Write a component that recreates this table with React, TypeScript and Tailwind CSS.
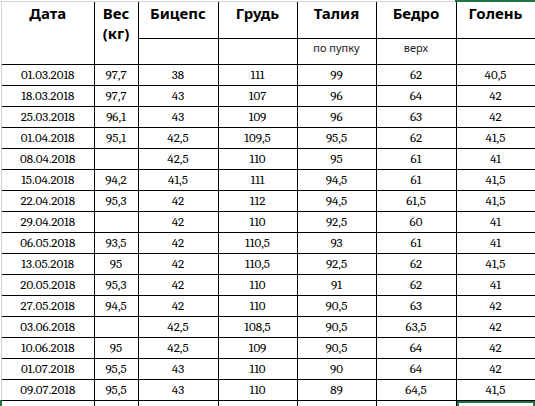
import React from "react";

const rows: string[][] = [
  ["01.03.2018", "97,7", "38", "111", "99", "62", "40,5"],
  ["18.03.2018", "97,7", "43", "107", "96", "64", "42"],
  ["25.03.2018", "96,1", "43", "109", "96", "63", "42"],
  ["01.04.2018", "95,1", "42,5", "109,5", "95,5", "62", "41,5"],
  ["08.04.2018", "", "42,5", "110", "95", "61", "41"],
  ["15.04.2018", "94,2", "41,5", "111", "94,5", "61", "41,5"],
  ["22.04.2018", "95,3", "42", "112", "94,5", "61,5", "41,5"],
  ["29.04.2018", "", "42", "110", "92,5", "60", "41"],
  ["06.05.2018", "93,5", "42", "110,5", "93", "61", "41"],
  ["13.05.2018", "95", "42", "110,5", "92,5", "62", "41,5"],
  ["20.05.2018", "95,3", "42", "110", "91", "62", "41"],
  ["27.05.2018", "94,5", "42", "110", "90,5", "63", "42"],
  ["03.06.2018", "", "42,5", "108,5", "90,5", "63,5", "42"],
  ["10.06.2018", "95", "42,5", "109", "90,5", "64", "42"],
  ["01.07.2018", "95,5", "43", "110", "90", "64", "42"],
  ["09.07.2018", "95,5", "43", "110", "89", "64,5", "41,5"],
];

export default function App() {
  const head = "font-bold text-[15px] leading-[20px] text-black align-top text-center border border-black pt-[1px] px-0";
  const sub = "text-[11px] leading-[13px] text-[#222] align-top text-center border border-black pt-[2px] px-0";
  const cell = "font-serif text-[13px] leading-[20px] text-black text-center align-middle border border-black p-0";
  return (
    <div className="w-[535px] h-[406px] overflow-hidden bg-white flex flex-col font-sans">
      <div className="flex h-[2px] shrink-0">
        <div className="w-[455px] border-b border-[#d4d4d4]" />
        <div className="w-[80px] border-t-2 border-[#217346]" />
      </div>
      <div className="flex flex-1 min-h-0">
        <div className="w-[2px] shrink-0 flex flex-col">
          <div className="flex-1 border-r border-[#d4d4d4]" />
          <div className="h-[6px] border-r-2 border-[#217346]" />
        </div>
        <table className="table-fixed border-collapse w-[533px] border-t-0 border-l-0">
          <colgroup>
            <col className="w-[92px]" />
            <col className="w-[44px]" />
            <col className="w-[80px]" />
            <col className="w-[79px]" />
            <col className="w-[79px]" />
            <col className="w-[80px]" />
            <col className="w-[79px]" />
          </colgroup>
          <tbody>
            <tr className="h-[36px]">
              <td rowSpan={2} className={head + " border-t-0 border-l-0"}>Дата</td>
              <td rowSpan={2} className={head + " border-t-0"}>Вес<br />(кг)</td>
              <td className={head + " border-t-0"}>Бицепс</td>
              <td className={head + " border-t-0"}>Грудь</td>
              <td className={head + " border-t-0"}>Талия</td>
              <td className={head + " border-t-0"}>Бедро</td>
              <td className={head + " border-t-0"}>Голень</td>
            </tr>
            <tr className="h-[26px]">
              <td className={sub}></td>
              <td className={sub}></td>
              <td className={sub}>по пупку</td>
              <td className={sub}>верх</td>
              <td className={sub}></td>
            </tr>
            {rows.map((r, i) => (
              <tr key={i} className="h-[21px]">
                {r.map((v, j) => (
                  <td key={j} className={cell + (j === 0 ? " border-l-0" : "")}>{v}</td>
                ))}
              </tr>
            ))}
            <tr className="h-[21px]">
              <td className={cell + " border-l-0"}></td>
              <td className={cell}></td>
              <td className={cell}></td>
              <td className={cell}></td>
              <td className={cell}></td>
              <td className={cell}></td>
              <td className={cell + " shadow-[inset_0_0_0_2px_#217346]"}></td>
            </tr>
          </tbody>
        </table>
      </div>
    </div>
  );
}
